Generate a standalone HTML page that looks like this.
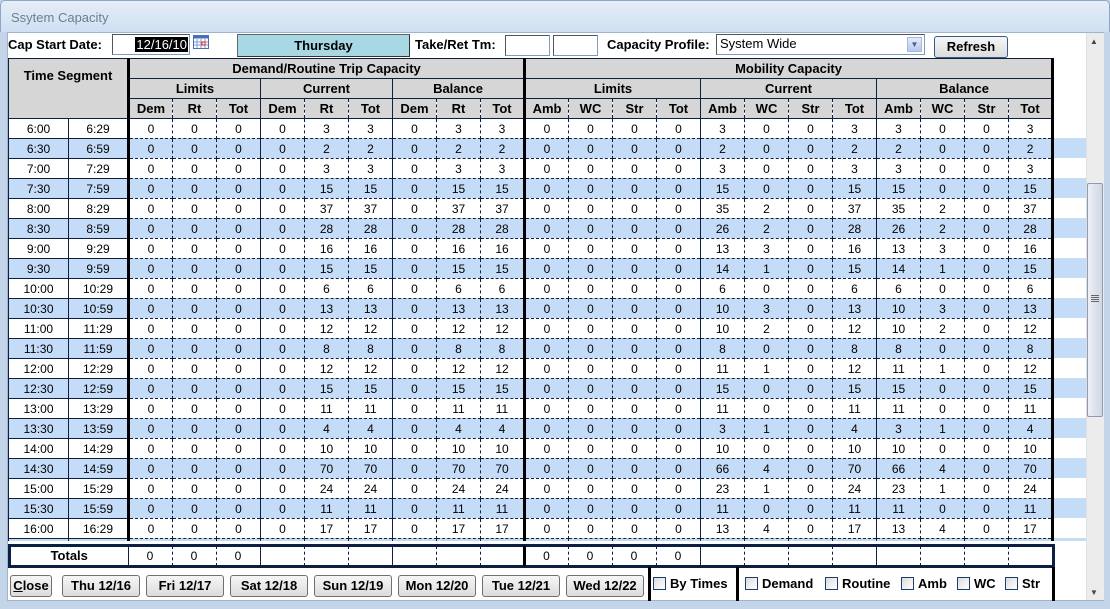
<!DOCTYPE html>
<html><head><meta charset="utf-8"><style>
*{box-sizing:border-box;margin:0;padding:0}
body{width:1110px;height:609px;position:relative;overflow:hidden;background:#c4d5ea;font-family:"Liberation Sans",Arial,sans-serif;color:#000}
.abs{position:absolute}
#title{left:0;top:0;width:1110px;height:32px;background:linear-gradient(#e6eef8,#cfdff1);border:1px solid #8ea6c6;border-bottom:none;border-radius:5px 5px 0 0}
#title span{position:absolute;left:10px;top:9px;font-size:13px;color:#6f7d90}
#content{left:7px;top:32px;width:1097px;height:569px;background:#fff;border:1px solid #9fb4cf}
.lbl{font-size:13px;font-weight:bold}
.inp{border:1px solid #7f9db9;border-top-color:#555;border-left-color:#555;background:#fff;height:21px}
.btn{position:absolute;height:22px;border:1px solid #707070;border-radius:3px;background:linear-gradient(#f6f6f6,#dcdcdc);font-size:13px;font-weight:bold;text-align:center;line-height:20px}
#grid{left:8px;top:58px;width:1078px;height:483px;overflow:hidden;background:repeating-linear-gradient(#fff 0 20px,#c5dcf9 20px 40px);background-position:0 60px}
#hdrbg{left:0;top:0;width:1078px;height:60px;background:#fff}
table{border-collapse:collapse;table-layout:fixed;position:absolute;left:0;top:0;font-size:12px;text-align:center}
td,th{padding:0;border:1px dashed #0d2040;height:20px;line-height:18px;overflow:hidden;white-space:nowrap}
th{background:#d6d6d6;font-weight:bold;font-size:13px;border-style:solid}
tr.h3 th{border-top-style:dashed;border-left-style:dashed;border-right-style:dashed}
.s{background:#c5dcf9}
.t1{border-right:1px solid #0d2040;border-top-style:solid;border-bottom-style:solid;border-left:1px solid #0d2040}
.tk{border-right:3px solid #000 !important}
.gs{border-right:1px solid #0d2040 !important}
.cb{display:inline-block;width:13px;height:13px;border:1px solid #1c3d6e;background:linear-gradient(135deg,#dcdcdc,#fff);vertical-align:-2px;margin-right:4px}
</style></head><body>
<div id="title" class="abs"><span>Ssytem Capacity</span></div>
<div id="content" class="abs"></div>

<div class="abs lbl" style="left:8px;top:37px">Cap Start Date:</div>
<div class="abs inp" style="left:112px;top:34px;width:78px"><span style="position:absolute;right:1px;top:2px;background:#000;color:#fff;font-size:13px;line-height:15px;padding:0 1px">12/16/10</span></div>
<svg class="abs" style="left:193px;top:34px" width="16" height="15"><rect x="0.5" y="1.5" width="15" height="13" fill="#fff" stroke="#4a6fb5"/><rect x="0.5" y="1.5" width="15" height="3" fill="#4a6fb5"/><g stroke="#7d9bd6"><line x1="4" y1="5" x2="4" y2="14"/><line x1="8" y1="5" x2="8" y2="14"/><line x1="12" y1="5" x2="12" y2="14"/><line x1="1" y1="8" x2="15" y2="8"/><line x1="1" y1="11" x2="15" y2="11"/></g><rect x="9" y="8" width="3" height="3" fill="none" stroke="#e02020"/></svg>
<div class="abs" style="left:237px;top:34px;width:173px;height:23px;background:#a8d8e3;border:1px solid #666;border-right-color:#333;border-bottom-color:#333;font-size:13px;font-weight:bold;text-align:center;line-height:21px">Thursday</div>
<div class="abs lbl" style="left:415px;top:37px">Take/Ret Tm:</div>
<div class="abs inp" style="left:505px;top:35px;width:45px"></div>
<div class="abs inp" style="left:553px;top:35px;width:45px"></div>
<div class="abs lbl" style="left:607px;top:37px">Capacity Profile:</div>
<div class="abs inp" style="left:716px;top:34px;width:209px;font-size:13px;line-height:18px;padding-left:3px">System Wide<span style="position:absolute;right:2px;top:2px;width:15px;height:15px;background:linear-gradient(#e4ecfa,#b8c9ee);border:1px solid #a8b8dc;font-size:8px;line-height:13px;text-align:center;color:#4d6185">&#9660;</span></div>
<div class="btn" style="left:934px;top:36px;width:74px;border-color:#3c5a86">Refresh</div>

<div id="grid" class="abs"><div id="hdrbg" class="abs"></div>
<table style="width:1046px">
<colgroup><col style="width:60px"><col style="width:60px"><col span="21" style="width:44px"></colgroup>
<tr><th colspan="2" rowspan="3" class="tk" style="border-left:1px solid #0d2040;vertical-align:top;padding-top:8px">Time Segment</th><th colspan="9" class="tk" style="height:19px">Demand/Routine Trip Capacity</th><th colspan="12" class="tk">Mobility Capacity</th></tr>
<tr><th colspan="3">Limits</th><th colspan="3">Current</th><th colspan="3" class="tk">Balance</th><th colspan="4">Limits</th><th colspan="4">Current</th><th colspan="4" class="tk">Balance</th></tr>
<tr class="h3"><th>Dem</th><th>Rt</th><th class="gs">Tot</th><th>Dem</th><th>Rt</th><th class="gs">Tot</th><th>Dem</th><th>Rt</th><th class="tk">Tot</th><th>Amb</th><th>WC</th><th>Str</th><th class="gs">Tot</th><th>Amb</th><th>WC</th><th>Str</th><th class="gs">Tot</th><th>Amb</th><th>WC</th><th>Str</th><th class="tk">Tot</th></tr>
<tr><td class="t1">6:00</td><td class="t1 tk">6:29</td><td>0</td><td>0</td><td class="gs">0</td><td>0</td><td>3</td><td class="gs">3</td><td>0</td><td>3</td><td class="tk">3</td><td>0</td><td>0</td><td>0</td><td class="gs">0</td><td>3</td><td>0</td><td>0</td><td class="gs">3</td><td>3</td><td>0</td><td>0</td><td class="tk">3</td></tr>
<tr class="s"><td class="t1">6:30</td><td class="t1 tk">6:59</td><td>0</td><td>0</td><td class="gs">0</td><td>0</td><td>2</td><td class="gs">2</td><td>0</td><td>2</td><td class="tk">2</td><td>0</td><td>0</td><td>0</td><td class="gs">0</td><td>2</td><td>0</td><td>0</td><td class="gs">2</td><td>2</td><td>0</td><td>0</td><td class="tk">2</td></tr>
<tr><td class="t1">7:00</td><td class="t1 tk">7:29</td><td>0</td><td>0</td><td class="gs">0</td><td>0</td><td>3</td><td class="gs">3</td><td>0</td><td>3</td><td class="tk">3</td><td>0</td><td>0</td><td>0</td><td class="gs">0</td><td>3</td><td>0</td><td>0</td><td class="gs">3</td><td>3</td><td>0</td><td>0</td><td class="tk">3</td></tr>
<tr class="s"><td class="t1">7:30</td><td class="t1 tk">7:59</td><td>0</td><td>0</td><td class="gs">0</td><td>0</td><td>15</td><td class="gs">15</td><td>0</td><td>15</td><td class="tk">15</td><td>0</td><td>0</td><td>0</td><td class="gs">0</td><td>15</td><td>0</td><td>0</td><td class="gs">15</td><td>15</td><td>0</td><td>0</td><td class="tk">15</td></tr>
<tr><td class="t1">8:00</td><td class="t1 tk">8:29</td><td>0</td><td>0</td><td class="gs">0</td><td>0</td><td>37</td><td class="gs">37</td><td>0</td><td>37</td><td class="tk">37</td><td>0</td><td>0</td><td>0</td><td class="gs">0</td><td>35</td><td>2</td><td>0</td><td class="gs">37</td><td>35</td><td>2</td><td>0</td><td class="tk">37</td></tr>
<tr class="s"><td class="t1">8:30</td><td class="t1 tk">8:59</td><td>0</td><td>0</td><td class="gs">0</td><td>0</td><td>28</td><td class="gs">28</td><td>0</td><td>28</td><td class="tk">28</td><td>0</td><td>0</td><td>0</td><td class="gs">0</td><td>26</td><td>2</td><td>0</td><td class="gs">28</td><td>26</td><td>2</td><td>0</td><td class="tk">28</td></tr>
<tr><td class="t1">9:00</td><td class="t1 tk">9:29</td><td>0</td><td>0</td><td class="gs">0</td><td>0</td><td>16</td><td class="gs">16</td><td>0</td><td>16</td><td class="tk">16</td><td>0</td><td>0</td><td>0</td><td class="gs">0</td><td>13</td><td>3</td><td>0</td><td class="gs">16</td><td>13</td><td>3</td><td>0</td><td class="tk">16</td></tr>
<tr class="s"><td class="t1">9:30</td><td class="t1 tk">9:59</td><td>0</td><td>0</td><td class="gs">0</td><td>0</td><td>15</td><td class="gs">15</td><td>0</td><td>15</td><td class="tk">15</td><td>0</td><td>0</td><td>0</td><td class="gs">0</td><td>14</td><td>1</td><td>0</td><td class="gs">15</td><td>14</td><td>1</td><td>0</td><td class="tk">15</td></tr>
<tr><td class="t1">10:00</td><td class="t1 tk">10:29</td><td>0</td><td>0</td><td class="gs">0</td><td>0</td><td>6</td><td class="gs">6</td><td>0</td><td>6</td><td class="tk">6</td><td>0</td><td>0</td><td>0</td><td class="gs">0</td><td>6</td><td>0</td><td>0</td><td class="gs">6</td><td>6</td><td>0</td><td>0</td><td class="tk">6</td></tr>
<tr class="s"><td class="t1">10:30</td><td class="t1 tk">10:59</td><td>0</td><td>0</td><td class="gs">0</td><td>0</td><td>13</td><td class="gs">13</td><td>0</td><td>13</td><td class="tk">13</td><td>0</td><td>0</td><td>0</td><td class="gs">0</td><td>10</td><td>3</td><td>0</td><td class="gs">13</td><td>10</td><td>3</td><td>0</td><td class="tk">13</td></tr>
<tr><td class="t1">11:00</td><td class="t1 tk">11:29</td><td>0</td><td>0</td><td class="gs">0</td><td>0</td><td>12</td><td class="gs">12</td><td>0</td><td>12</td><td class="tk">12</td><td>0</td><td>0</td><td>0</td><td class="gs">0</td><td>10</td><td>2</td><td>0</td><td class="gs">12</td><td>10</td><td>2</td><td>0</td><td class="tk">12</td></tr>
<tr class="s"><td class="t1">11:30</td><td class="t1 tk">11:59</td><td>0</td><td>0</td><td class="gs">0</td><td>0</td><td>8</td><td class="gs">8</td><td>0</td><td>8</td><td class="tk">8</td><td>0</td><td>0</td><td>0</td><td class="gs">0</td><td>8</td><td>0</td><td>0</td><td class="gs">8</td><td>8</td><td>0</td><td>0</td><td class="tk">8</td></tr>
<tr><td class="t1">12:00</td><td class="t1 tk">12:29</td><td>0</td><td>0</td><td class="gs">0</td><td>0</td><td>12</td><td class="gs">12</td><td>0</td><td>12</td><td class="tk">12</td><td>0</td><td>0</td><td>0</td><td class="gs">0</td><td>11</td><td>1</td><td>0</td><td class="gs">12</td><td>11</td><td>1</td><td>0</td><td class="tk">12</td></tr>
<tr class="s"><td class="t1">12:30</td><td class="t1 tk">12:59</td><td>0</td><td>0</td><td class="gs">0</td><td>0</td><td>15</td><td class="gs">15</td><td>0</td><td>15</td><td class="tk">15</td><td>0</td><td>0</td><td>0</td><td class="gs">0</td><td>15</td><td>0</td><td>0</td><td class="gs">15</td><td>15</td><td>0</td><td>0</td><td class="tk">15</td></tr>
<tr><td class="t1">13:00</td><td class="t1 tk">13:29</td><td>0</td><td>0</td><td class="gs">0</td><td>0</td><td>11</td><td class="gs">11</td><td>0</td><td>11</td><td class="tk">11</td><td>0</td><td>0</td><td>0</td><td class="gs">0</td><td>11</td><td>0</td><td>0</td><td class="gs">11</td><td>11</td><td>0</td><td>0</td><td class="tk">11</td></tr>
<tr class="s"><td class="t1">13:30</td><td class="t1 tk">13:59</td><td>0</td><td>0</td><td class="gs">0</td><td>0</td><td>4</td><td class="gs">4</td><td>0</td><td>4</td><td class="tk">4</td><td>0</td><td>0</td><td>0</td><td class="gs">0</td><td>3</td><td>1</td><td>0</td><td class="gs">4</td><td>3</td><td>1</td><td>0</td><td class="tk">4</td></tr>
<tr><td class="t1">14:00</td><td class="t1 tk">14:29</td><td>0</td><td>0</td><td class="gs">0</td><td>0</td><td>10</td><td class="gs">10</td><td>0</td><td>10</td><td class="tk">10</td><td>0</td><td>0</td><td>0</td><td class="gs">0</td><td>10</td><td>0</td><td>0</td><td class="gs">10</td><td>10</td><td>0</td><td>0</td><td class="tk">10</td></tr>
<tr class="s"><td class="t1">14:30</td><td class="t1 tk">14:59</td><td>0</td><td>0</td><td class="gs">0</td><td>0</td><td>70</td><td class="gs">70</td><td>0</td><td>70</td><td class="tk">70</td><td>0</td><td>0</td><td>0</td><td class="gs">0</td><td>66</td><td>4</td><td>0</td><td class="gs">70</td><td>66</td><td>4</td><td>0</td><td class="tk">70</td></tr>
<tr><td class="t1">15:00</td><td class="t1 tk">15:29</td><td>0</td><td>0</td><td class="gs">0</td><td>0</td><td>24</td><td class="gs">24</td><td>0</td><td>24</td><td class="tk">24</td><td>0</td><td>0</td><td>0</td><td class="gs">0</td><td>23</td><td>1</td><td>0</td><td class="gs">24</td><td>23</td><td>1</td><td>0</td><td class="tk">24</td></tr>
<tr class="s"><td class="t1">15:30</td><td class="t1 tk">15:59</td><td>0</td><td>0</td><td class="gs">0</td><td>0</td><td>11</td><td class="gs">11</td><td>0</td><td>11</td><td class="tk">11</td><td>0</td><td>0</td><td>0</td><td class="gs">0</td><td>11</td><td>0</td><td>0</td><td class="gs">11</td><td>11</td><td>0</td><td>0</td><td class="tk">11</td></tr>
<tr><td class="t1">16:00</td><td class="t1 tk">16:29</td><td>0</td><td>0</td><td class="gs">0</td><td>0</td><td>17</td><td class="gs">17</td><td>0</td><td>17</td><td class="tk">17</td><td>0</td><td>0</td><td>0</td><td class="gs">0</td><td>13</td><td>4</td><td>0</td><td class="gs">17</td><td>13</td><td>4</td><td>0</td><td class="tk">17</td></tr>
<tr class="s"><td class="t1">16:30</td><td class="t1 tk">16:59</td><td>0</td><td>0</td><td class="gs">0</td><td>0</td><td>9</td><td class="gs">9</td><td>0</td><td>9</td><td class="tk">9</td><td>0</td><td>0</td><td>0</td><td class="gs">0</td><td>9</td><td>0</td><td>0</td><td class="gs">9</td><td>9</td><td>0</td><td>0</td><td class="tk">9</td></tr>
</table></div>

<div class="abs" style="left:8px;top:544px;width:1047px;height:24px;border:3px solid #0b1f45;background:#fff"></div>
<table style="left:11px;top:546px;width:1041px;font-size:12px">
<colgroup><col style="width:117px"><col span="21" style="width:44px"></colgroup>
<tr><td style="border:none;border-right:1px solid #0d2040;font-weight:bold;font-size:13px;height:19px;line-height:16px">Totals</td><td style="border-top:none;border-bottom:none;line-height:16px">0</td><td style="border-top:none;border-bottom:none;line-height:16px">0</td><td class="gs" style="border-top:none;border-bottom:none;line-height:16px">0</td><td style="border-top:none;border-bottom:none"></td><td style="border-top:none;border-bottom:none"></td><td class="gs" style="border-top:none;border-bottom:none"></td><td style="border-top:none;border-bottom:none"></td><td style="border-top:none;border-bottom:none"></td><td class="tk" style="border-top:none;border-bottom:none"></td><td style="border-top:none;border-bottom:none;line-height:16px">0</td><td style="border-top:none;border-bottom:none;line-height:16px">0</td><td style="border-top:none;border-bottom:none;line-height:16px">0</td><td class="gs" style="border-top:none;border-bottom:none;line-height:16px">0</td><td style="border-top:none;border-bottom:none"></td><td style="border-top:none;border-bottom:none"></td><td style="border-top:none;border-bottom:none"></td><td class="gs" style="border-top:none;border-bottom:none"></td><td style="border-top:none;border-bottom:none"></td><td style="border-top:none;border-bottom:none"></td><td style="border-top:none;border-bottom:none"></td><td style="border:none"></td></tr>
</table>

<div class="btn" style="left:10px;top:575px;width:42px"><u>C</u>lose</div>
<div class="btn" style="left:62px;top:575px;width:78px">Thu 12/16</div>
<div class="btn" style="left:146px;top:575px;width:78px">Fri 12/17</div>
<div class="btn" style="left:230px;top:575px;width:78px">Sat 12/18</div>
<div class="btn" style="left:314px;top:575px;width:78px">Sun 12/19</div>
<div class="btn" style="left:398px;top:575px;width:78px">Mon 12/20</div>
<div class="btn" style="left:482px;top:575px;width:78px">Tue 12/21</div>
<div class="btn" style="left:566px;top:575px;width:78px">Wed 12/22</div>
<div class="abs" style="left:648px;top:567px;width:3px;height:34px;background:#000"></div>
<div class="abs" style="left:736px;top:567px;width:3px;height:34px;background:#000"></div>
<div class="abs" style="left:1052px;top:567px;width:3px;height:34px;background:#000"></div>
<div class="abs lbl" style="left:653px;top:576px"><span class="cb"></span>By Times</div>
<div class="abs lbl" style="left:745px;top:576px"><span class="cb"></span>Demand</div>
<div class="abs lbl" style="left:825px;top:576px"><span class="cb"></span>Routine</div>
<div class="abs lbl" style="left:901px;top:576px"><span class="cb"></span>Amb</div>
<div class="abs lbl" style="left:957px;top:576px"><span class="cb"></span>WC</div>
<div class="abs lbl" style="left:1005px;top:576px"><span class="cb"></span>Str</div>

<div class="abs" style="left:1086px;top:33px;width:18px;height:567px;background:#ececec;border-left:1px solid #e0e0e0"></div>
<div class="abs" style="left:1090px;top:37px;font-size:8px;color:#444">&#9650;</div>
<div class="abs" style="left:1090px;top:588px;font-size:8px;color:#444">&#9660;</div>
<div class="abs" style="left:1087px;top:183px;width:16px;height:234px;border:1px solid #8f9ab0;border-radius:2px;background:linear-gradient(90deg,#eef1f6,#dde3ec 50%,#d0d8e4)"></div>
<div class="abs" style="left:1091px;top:295px;width:8px;height:8px;background:repeating-linear-gradient(#666 0 1px,transparent 1px 2px)"></div>
</body></html>
